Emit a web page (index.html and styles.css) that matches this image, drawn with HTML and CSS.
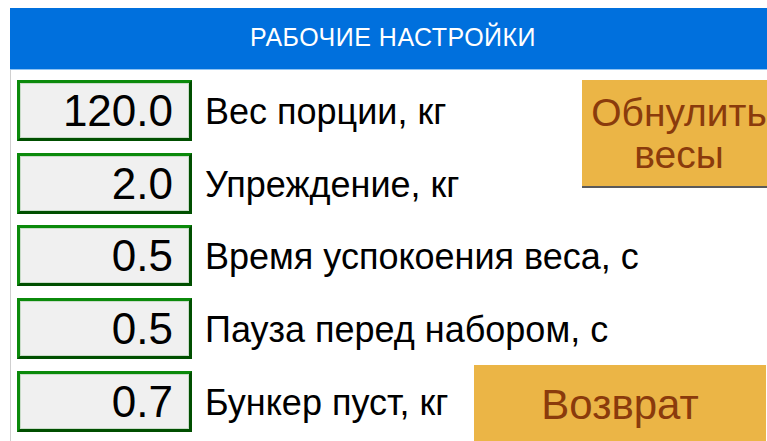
FILE: index.html
```html
<!DOCTYPE html>
<html lang="ru">
<head>
<meta charset="utf-8">
<title>Рабочие настройки</title>
<link rel="stylesheet" href="styles.css">
</head>
<body>
<div class="screen">
  <header class="title-bar">РАБОЧИЕ НАСТРОЙКИ</header>
  <main class="panel">
    <div class="params">
      <div class="param">
        <div class="value">120.0</div>
        <div class="label">Вес порции, кг</div>
      </div>
      <div class="param">
        <div class="value">2.0</div>
        <div class="label">Упреждение, кг</div>
      </div>
      <div class="param">
        <div class="value">0.5</div>
        <div class="label">Время успокоения веса, с</div>
      </div>
      <div class="param">
        <div class="value">0.5</div>
        <div class="label">Пауза перед набором, с</div>
      </div>
      <div class="param">
        <div class="value">0.7</div>
        <div class="label">Бункер пуст, кг</div>
      </div>
    </div>
    <div class="actions">
      <button class="btn btn-zero" type="button">Обнулить<br>весы</button>
      <button class="btn btn-back" type="button">Возврат</button>
    </div>
  </main>
</div>
</body>
</html>
```
FILE: styles.css
```css
html, body {
  margin: 0;
  padding: 0;
  background: #ffffff;
  overflow: hidden;
}

.screen {
  width: 767px;
  height: 441px;
  padding: 8px 0 0 10px;
  box-sizing: border-box;
  font-family: "Liberation Sans", Arial, sans-serif;
  display: flex;
  flex-direction: column;
}

.title-bar {
  height: 62px;
  flex: none;
  background: #0070dd;
  border-bottom: 1px solid #8fc3f2;
  color: #ffffff;
  font-size: 25px;
  letter-spacing: 0.5px;
  display: flex;
  align-items: center;
  justify-content: center;
  padding-left: 9px;
  padding-bottom: 2px;
  box-sizing: border-box;
}

/* parameter list and the button column share one grid cell */
.panel {
  flex: 1;
  display: grid;
  grid-template-columns: 1fr;
  grid-template-rows: 1fr;
  border-left: 1px solid #cfcfcf;
  padding: 10px 0 0 6px;
  min-height: 0;
}

.params,
.actions {
  grid-area: 1 / 1;
}

.params {
  display: flex;
  flex-direction: column;
  gap: 11.7px;
}

.param {
  display: flex;
  align-items: center;
  gap: 13px;
}

.value {
  width: 175px;
  height: 61px;
  flex: none;
  box-sizing: border-box;
  border: 3px solid;
  border-color: #0b8a0b #004f00 #004f00 #0b8a0b;
  box-shadow: inset 0 0 0 1px #c9dcc9;
  background: #f0f0f0;
  color: #000000;
  font-size: 44px;
  text-align: right;
  padding: 2px 16px 0 0;
  line-height: 52px;
}

.label {
  font-size: 36px;
  color: #000000;
  padding-top: 3px;
  white-space: nowrap;
}

.actions {
  display: flex;
  flex-direction: column;
  align-items: flex-end;
  justify-content: space-between;
}

.btn {
  font-family: inherit;
  border: none;
  background: #ebb546;
  color: #8a3b0c;
  padding: 0;
  cursor: pointer;
  flex: none;
}

.btn-zero {
  width: 194px;
  height: 108px;
  margin-right: -9px;
  font-size: 39px;
  line-height: 42px;
  border-bottom: 2px solid #5a5a5a;
  padding-top: 2px;
}

.btn-back {
  width: 292px;
  height: 80px;
  margin-right: 1px;
  margin-bottom: -4px;
  font-size: 42px;
}
```
